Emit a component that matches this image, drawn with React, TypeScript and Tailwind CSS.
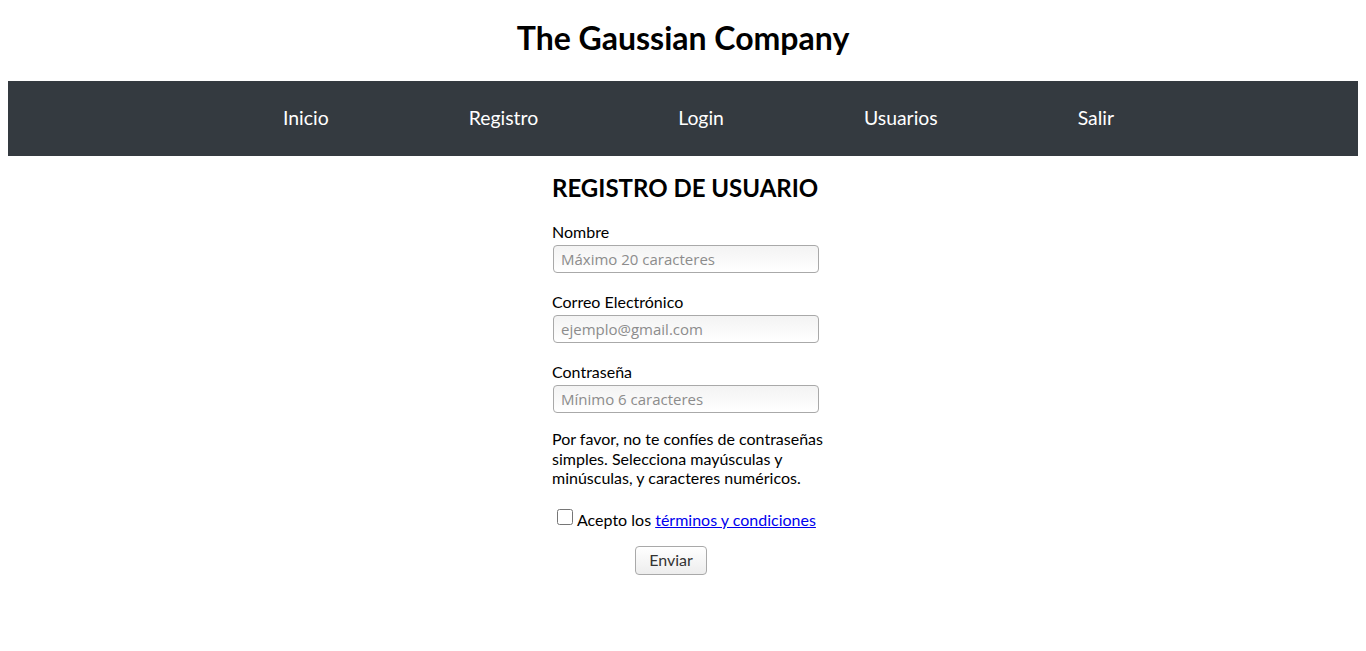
import React, { useState } from 'react';

const links = ['Inicio', 'Registro', 'Login', 'Usuarios', 'Salir'];

const Field: React.FC<{ label: string; type: string; placeholder: string }> = ({ label, type, placeholder }) => (
  <div className="mb-[19px]">
    <label className="block text-[16px] leading-[19px] text-black">{label}</label>
    <input
      type={type}
      placeholder={placeholder}
      className="mt-[4px] ml-px block h-[28px] w-[266px] rounded-[4px] border border-[#a9a9a9] bg-gradient-to-b from-[#f3f3f3] to-white px-[7px] text-[15px] text-black placeholder:text-[#8c8c8c] outline-none"
      style={{ fontFamily: '"Open Sans", sans-serif' }}
    />
  </div>
);

const App: React.FC = () => {
  const [acepto, setAcepto] = useState(false);

  return (
    <div className="min-h-[651px] bg-white p-2 font-['Lato',sans-serif] text-black">
      <h1 className="pt-[11px] pb-[24px] text-center text-[32px] font-bold leading-[38px]">The Gaussian Company</h1>

      <nav className="flex h-[75px] items-center justify-center gap-[140px] bg-[#343a40] pb-[2px] pl-[31px]">
        {links.map(link => (
          <a key={link} href="#" className="text-[19.4px] text-white">
            {link}
          </a>
        ))}
      </nav>

      <div className="mx-auto w-[290px] pl-[14px]">
        <h2 className="mt-[17px] mb-[19px] text-[24px] font-bold leading-[30px]">REGISTRO DE USUARIO</h2>
        <form onSubmit={e => e.preventDefault()}>
          <Field label="Nombre" type="text" placeholder="Máximo 20 caracteres" />
          <Field label="Correo Electrónico" type="email" placeholder="ejemplo@gmail.com" />
          <Field label="Contraseña" type="password" placeholder="Mínimo 6 caracteres" />

          <p className="-mt-[3px] text-[16px] leading-[19.5px]">
            Por favor, no te confíes de contraseñas simples. Selecciona mayúsculas y minúsculas, y caracteres numéricos.
          </p>

          <div className="mt-[22px] flex items-center pl-[5px] text-[16px] leading-[19px]">
            <input
              type="checkbox"
              checked={acepto}
              onChange={e => setAcepto(e.target.checked)}
              className="mr-[4px] h-[16px] w-[16px] -translate-y-[2px]"
            />
            <span>
              Acepto los{' '}
              <a href="#" className="text-[#0000ee] underline">términos y condiciones</a>
            </span>
          </div>

          <div className="mt-[17px] pl-[83px]">
            <button
              type="submit"
              className="h-[29px] w-[72px] rounded-[4px] border border-[#a9a9a9] bg-gradient-to-b from-white to-[#ededed] text-[16px] text-[#333]"
            >
              Enviar
            </button>
          </div>
        </form>
      </div>
    </div>
  );
};

export default App;
